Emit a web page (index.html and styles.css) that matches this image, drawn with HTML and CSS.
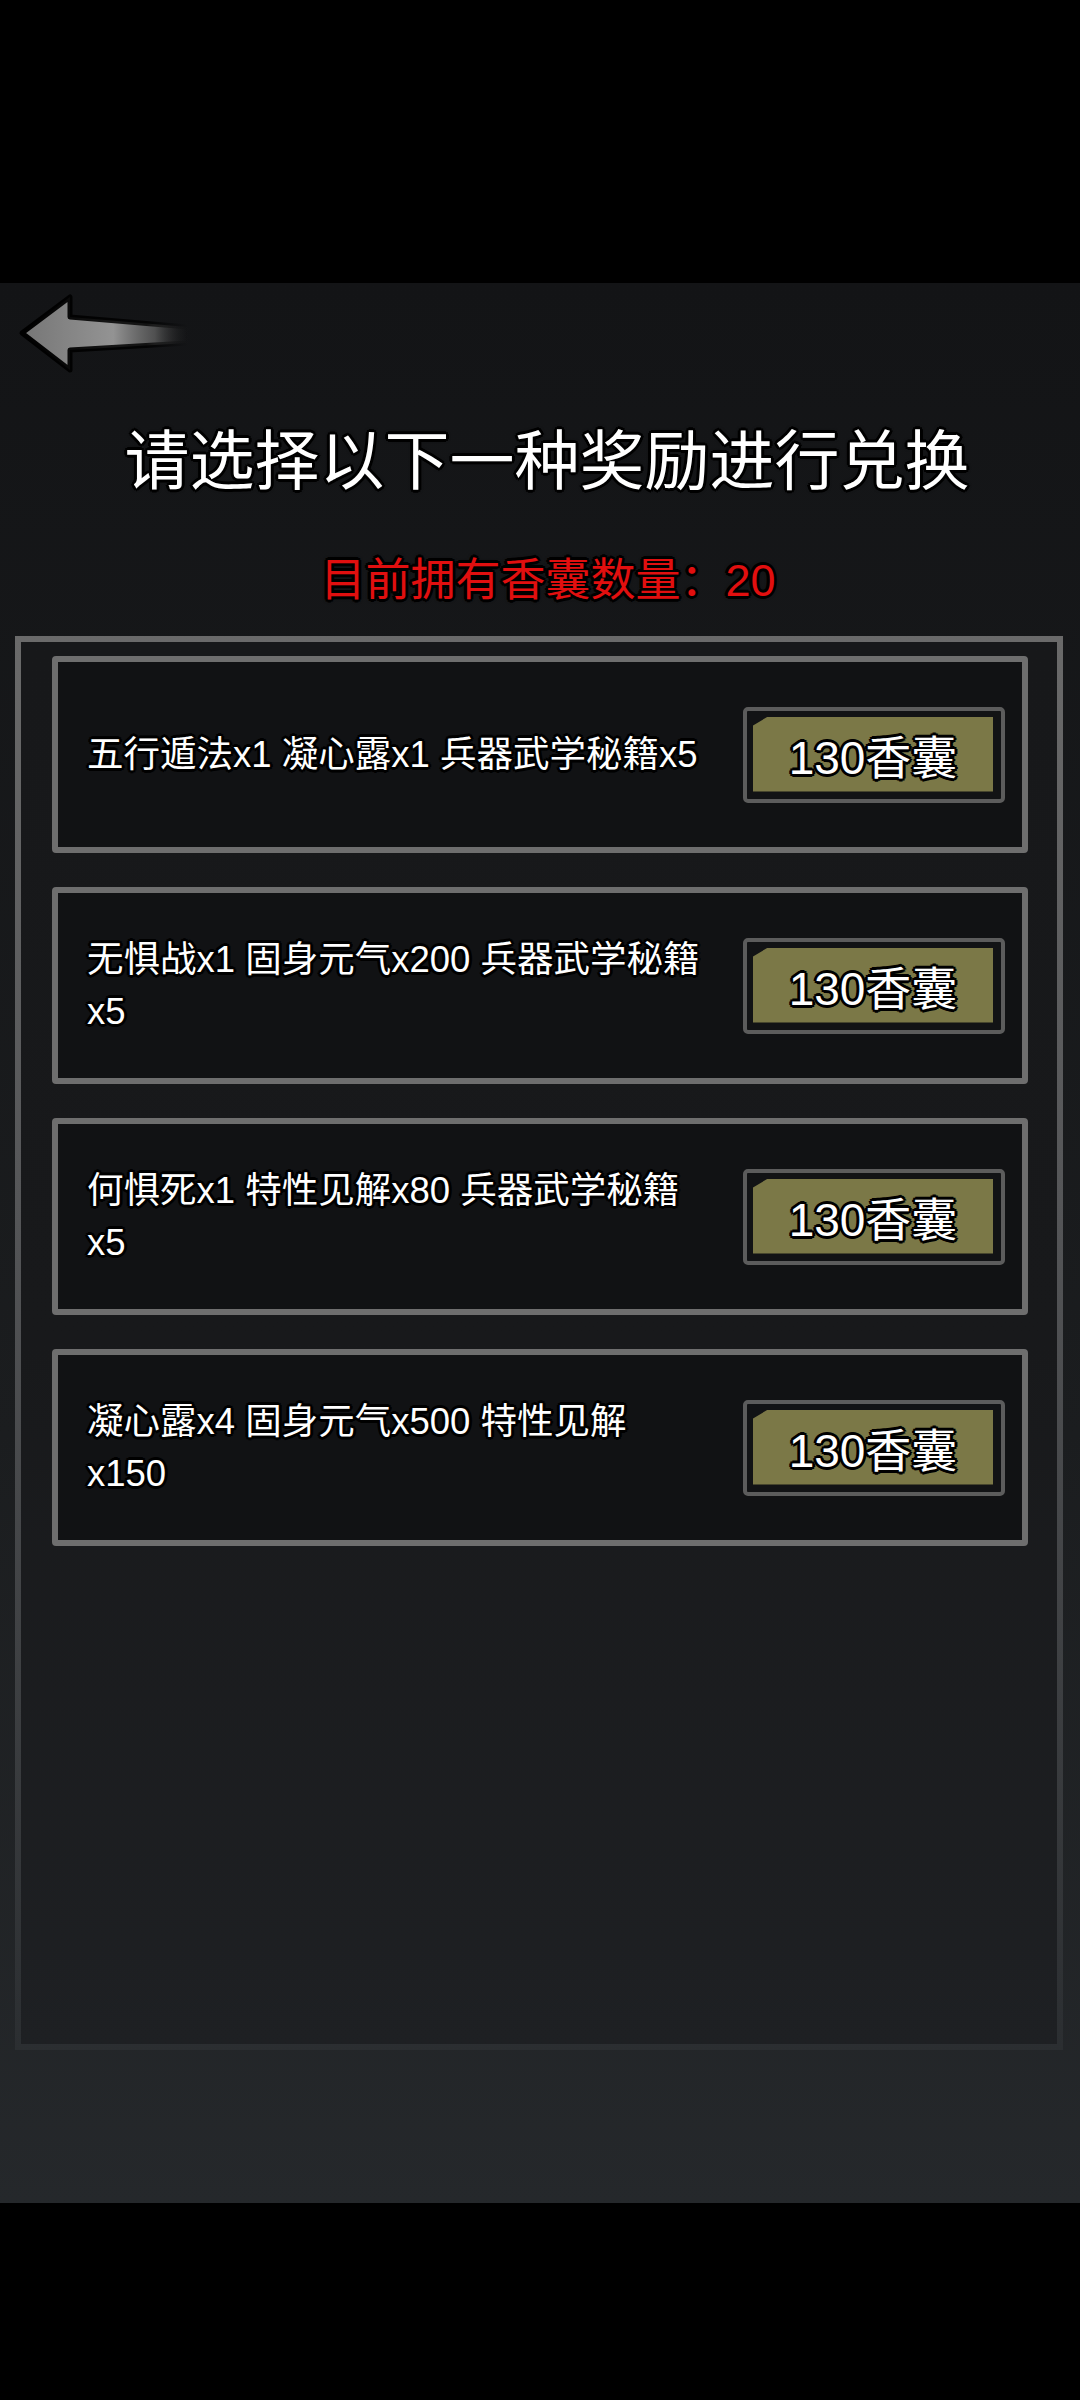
FILE: index.html
```html
<!DOCTYPE html>
<html lang="zh-CN">
<head>
    <meta charset="UTF-8">
    <title>香囊兑换</title>
    <link rel="stylesheet" href="styles.css">
</head>
<body>
<div class="app">
    <!--返回按钮-->
    <div class="back">
        <svg width="175" height="80" viewBox="0 0 175 80">
            <defs>
                <linearGradient id="arrowFill" x1="0" y1="0" x2="1" y2="0">
                    <stop offset="0" stop-color="#767676"/>
                    <stop offset="0.55" stop-color="#939393"/>
                    <stop offset="0.8" stop-color="#6a6a6a" stop-opacity="0.7"/>
                    <stop offset="1" stop-color="#2a2a2a" stop-opacity="0"/>
                </linearGradient>
                <linearGradient id="arrowStroke" x1="0" y1="0" x2="1" y2="0">
                    <stop offset="0" stop-color="#000"/>
                    <stop offset="0.75" stop-color="#000" stop-opacity="0.8"/>
                    <stop offset="1" stop-color="#000" stop-opacity="0"/>
                </linearGradient>
            </defs>
            <path d="M4 40 L52 4 L52 24 L170 34 L170 50 L52 57 L52 77 Z"
                  fill="url(#arrowFill)" stroke="url(#arrowStroke)" stroke-width="5" stroke-linejoin="round"/>
        </svg>
    </div>

    <h1 class="title">请选择以下一种奖励进行兑换</h1>
    <p class="count">目前拥有香囊数量：20</p>

    <div class="panel">
        <div class="item">
            <div class="item-text">五行遁法x1 凝心露x1 兵器武学秘籍x5</div>
            <div class="buy"><span>130香囊</span></div>
        </div>
        <div class="item">
            <div class="item-text">无惧战x1 固身元气x200 兵器武学秘籍<br>x5</div>
            <div class="buy"><span>130香囊</span></div>
        </div>
        <div class="item">
            <div class="item-text">何惧死x1 特性见解x80 兵器武学秘籍<br>x5</div>
            <div class="buy"><span>130香囊</span></div>
        </div>
        <div class="item">
            <div class="item-text">凝心露x4 固身元气x500 特性见解<br>x150</div>
            <div class="buy"><span>130香囊</span></div>
        </div>
    </div>
</div>
</body>
</html>
```

FILE: styles.css
```css
html, body, div, p, h1 {
    margin: 0;
    padding: 0;
}

body {
    width: 1080px;
    height: 2400px;
    background: #000;
    font-family: "Liberation Sans", "Noto Sans CJK SC", sans-serif;
    color: #fff;
}

.app {
    height: 1920px;
    margin-top: 283px;
    padding-top: 10px;
    box-sizing: border-box;
    background: linear-gradient(#131416, #1b1d1f 60%, #25282b);
    display: flex;
    flex-direction: column;
}

.back {
    height: 80px;
    margin-left: 18px;
}

.title {
    margin-top: 44px;
    padding-left: 14px;
    font-size: 65px;
    font-weight: normal;
    line-height: 90px;
    text-align: center;
    text-shadow: 0 0 4px #000, 3px 0 0 #000, -3px 0 0 #000, 0 3px 0 #000, 0 -3px 0 #000,
                 2px 2px 0 #000, -2px -2px 0 #000, 2px -2px 0 #000, -2px 2px 0 #000;
}

.count {
    margin-top: 44px;
    padding-left: 16px;
    font-size: 45px;
    line-height: 60px;
    text-align: center;
    color: #e10f0f;
    text-shadow: 0 0 4px #000, 3px 0 0 #000, -3px 0 0 #000, 0 3px 0 #000, 0 -3px 0 #000,
                 2px 2px 0 #000, -2px -2px 0 #000, 2px -2px 0 #000, -2px 2px 0 #000;
}

.panel {
    width: 1048px;
    height: 1414px;
    margin: 25px 0 0 15px;
    box-sizing: border-box;
    padding: 14px 0 0 31px;
    border: 6px solid #686868;
    border-image: linear-gradient(#6a6a6a, #555658 40%, #2b2e31) 6;
    background: linear-gradient(#17181a, #18191b 50%, #1e2023);
    display: flex;
    flex-direction: column;
    gap: 34px;
}

.item {
    width: 976px;
    height: 197px;
    box-sizing: border-box;
    border: 6px solid #6e6e6e;
    border-radius: 4px;
    background: #111214;
    padding: 0 17px 0 29px;
    display: flex;
    align-items: center;
}

.item-text {
    flex: 1;
    font-size: 36.5px;
    line-height: 52px;
    white-space: nowrap;
    text-shadow: 0 0 3px #000, 3px 0 0 #000, -3px 0 0 #000, 0 3px 0 #000, 0 -3px 0 #000,
                 2px 2px 0 #000, -2px -2px 0 #000, 2px -2px 0 #000, -2px 2px 0 #000;
}

.buy {
    width: 262px;
    height: 96px;
    box-sizing: border-box;
    border: 4px solid #5c5c5c;
    border-radius: 5px;
    background: #121315;
    padding: 6px 8px 7px 6px;
}

.buy span {
    display: flex;
    align-items: center;
    justify-content: center;
    height: 100%;
    background: #7b7847;
    clip-path: polygon(15px 0, 100% 0, 100% 100%, 0 100%, 0 9px);
    font-size: 46px;
    text-shadow: 0 0 3px #000, 3px 0 0 #000, -3px 0 0 #000, 0 3px 0 #000, 0 -3px 0 #000,
                 2px 2px 0 #000, -2px -2px 0 #000, 2px -2px 0 #000, -2px 2px 0 #000;
}
```
